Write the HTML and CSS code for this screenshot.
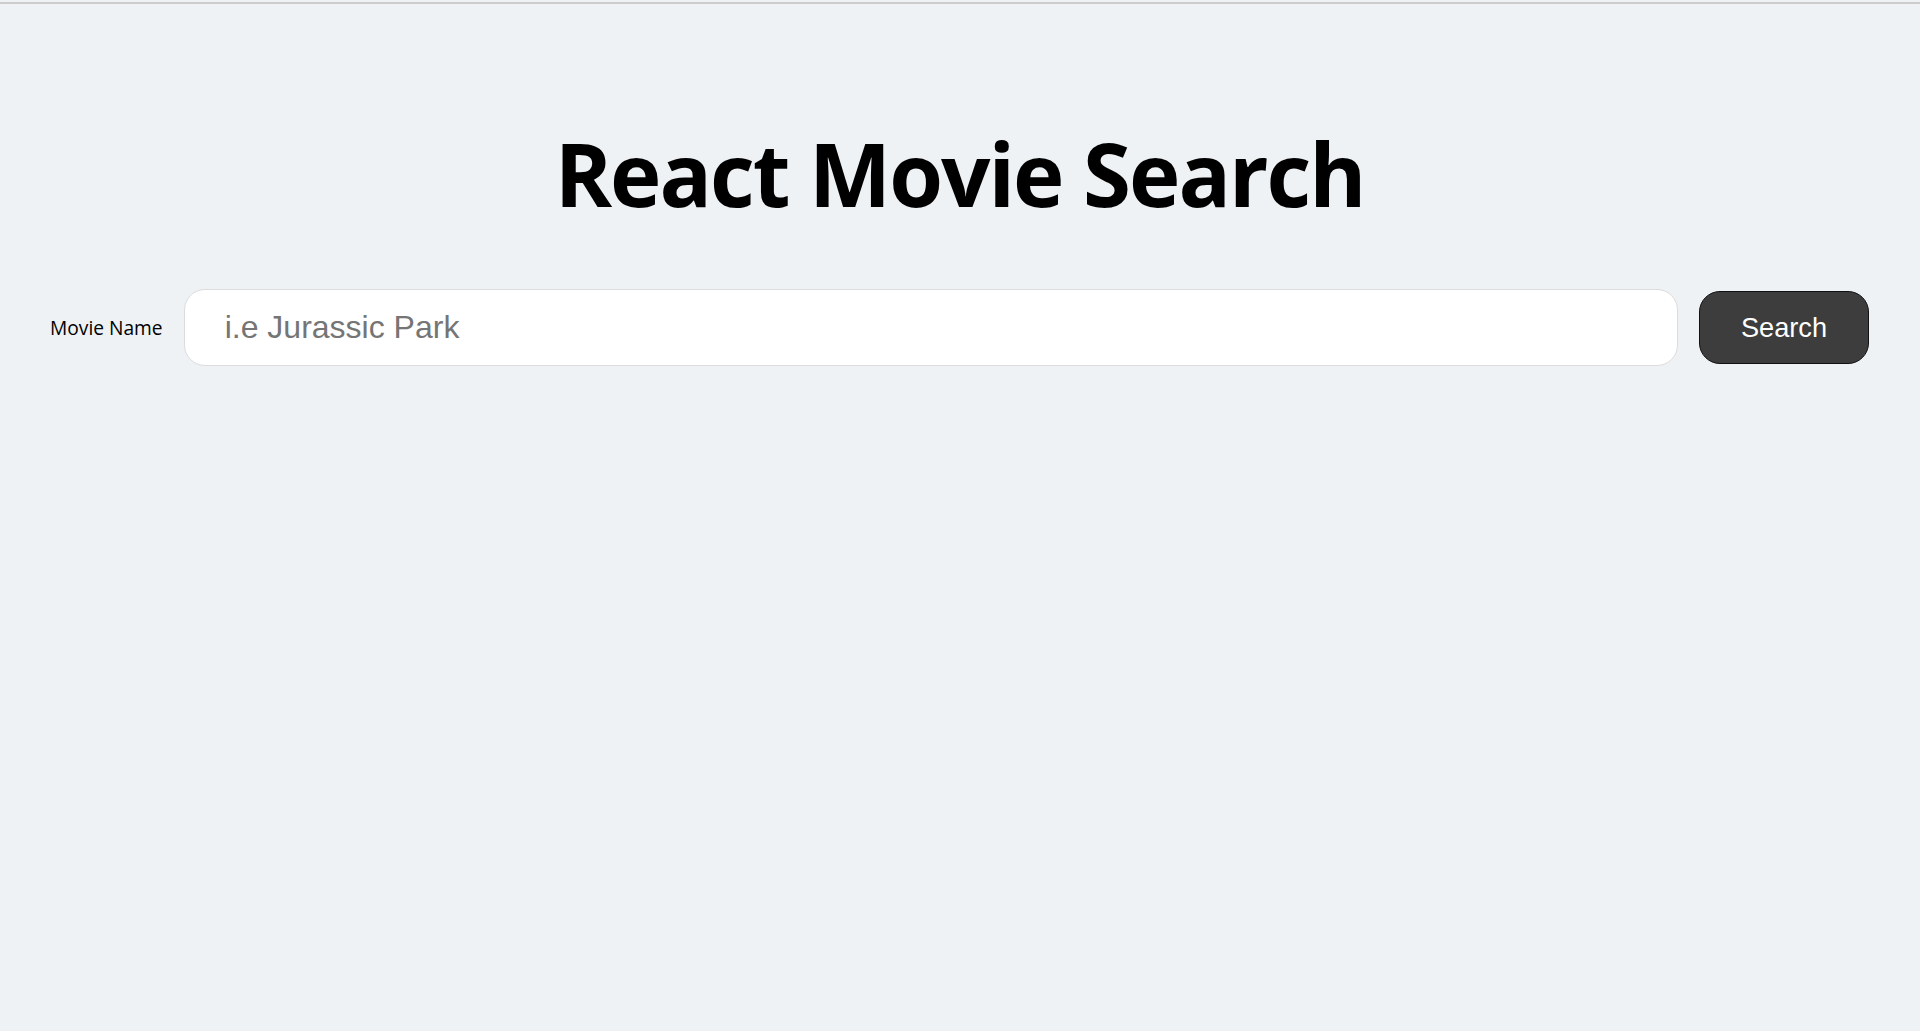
FILE: index.html
```html
<!DOCTYPE html>
<html lang="en">
<head>
<meta charset="utf-8">
<title>React Movie Search</title>
<link rel="stylesheet" href="styles.css">
</head>
<body>
<div class="topline"></div>
<main class="app">
  <h1 class="title">React Movie Search</h1>
  <form class="search-form">
    <label class="search-label" for="query">Movie Name</label>
    <input class="search-input" id="query" type="text" name="query" placeholder="i.e Jurassic Park">
    <button class="search-button" type="button">Search</button>
  </form>
</main>
</body>
</html>
```
FILE: styles.css
```css
html, body {
  margin: 0;
  padding: 0;
  background: #eef2f5;
  height: 100%;
}
body {
  font-family: "Open Sans", "Noto Sans", sans-serif;
  padding-top: 2px;
  box-sizing: border-box;
}
.topline {
  height: 2px;
  background: #cbcccb;
}
.app {
  padding: 0 51px 0 50px;
}
.title {
  margin: 0;
  padding-top: 117px;
  text-align: center;
  font-family: "Open Sans", "Noto Sans", sans-serif;
  font-weight: 700;
  font-size: 87px;
  line-height: 1.2;
  letter-spacing: -2px;
  color: #000;
}
.search-form {
  display: flex;
  align-items: center;
  gap: 21px;
  margin-top: 64px;
}
.search-label {
  font-family: "Open Sans", "Noto Sans", sans-serif;
  font-size: 19.2px;
  color: #000;
  white-space: nowrap;
}
.search-input {
  flex: 1;
  min-width: 0;
  box-sizing: border-box;
  height: 77px;
  padding: 0 40px;
  border: 1px solid #dcdcdc;
  border-radius: 21px;
  background: #fff;
  font-family: "Liberation Sans", Arial, sans-serif;
  font-size: 32px;
  color: #333;
  outline: none;
}
.search-input::placeholder {
  color: #757575;
}
.search-button {
  box-sizing: border-box;
  width: 170px;
  height: 73px;
  border: 1px solid #111;
  border-radius: 21px;
  background: #3c3d3c;
  color: #fff;
  font-family: "Liberation Sans", Arial, sans-serif;
  font-size: 27.2px;
  cursor: pointer;
  padding: 0;
}
```
